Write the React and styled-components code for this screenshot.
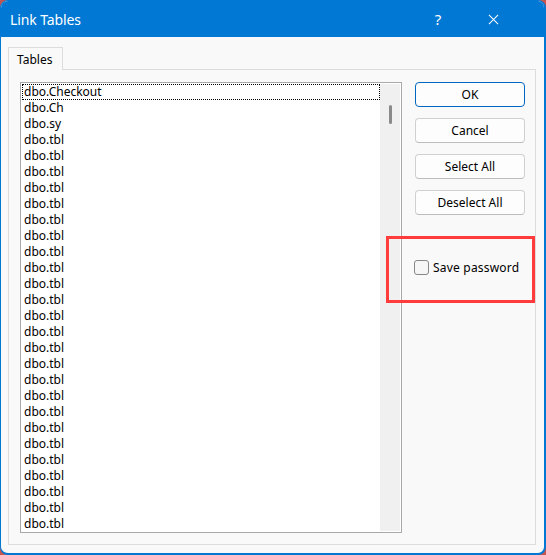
import React from "react";
import styled, { createGlobalStyle } from "styled-components";

const GlobalStyle = createGlobalStyle`
  html, body {
    margin: 0;
    padding: 0;
    background: #c4564f;
  }
  * {
    box-sizing: border-box;
  }
`;

const rows = [
  "dbo.Checkout",
  "dbo.Ch",
  "dbo.sy",
  ...Array.from({ length: 25 }, () => "dbo.tbl"),
];

const buttons = ["OK", "Cancel", "Select All", "Deselect All"];

const App = () => {
  return (
    <>
      <GlobalStyle />
      <Window>
        <TitleBar>
          <Title>Link Tables</Title>
          <TitleActions>
            <HelpMark>?</HelpMark>
            <CloseIcon viewBox="0 0 12 12">
              <path d="M1 1 L11 11 M11 1 L1 11" stroke="#fff" strokeWidth="1.1" fill="none" />
            </CloseIcon>
          </TitleActions>
        </TitleBar>
        <Body>
          <TabStrip>
            <Tab>Tables</Tab>
          </TabStrip>
          <Panel>
            <ListBox>
              <Items>
                {rows.map((name, index) => (
                  <Item key={index} focused={index === 0}>
                    {name}
                  </Item>
                ))}
              </Items>
              <ScrollTrack>
                <Thumb />
              </ScrollTrack>
            </ListBox>
            <Side>
              {buttons.map((label) => (
                <Button key={label} primary={label === "OK"}>
                  {label}
                </Button>
              ))}
              <Highlight>
                <CheckRow>
                  <CheckBox />
                  <CheckLabel>Save password</CheckLabel>
                </CheckRow>
              </Highlight>
            </Side>
          </Panel>
        </Body>
      </Window>
    </>
  );
};

export default App;

const Window = styled.div`
  width: 546px;
  height: 555px;
  display: flex;
  flex-direction: column;
  border: 1px solid #0078d4;
  border-right-width: 2px;
  border-bottom-width: 2px;
  border-radius: 8px;
  overflow: hidden;
  background: #f9f9f9;
  font-family: "Noto Sans", "Open Sans", sans-serif;
`;

const TitleBar = styled.div`
  height: 36px;
  flex: none;
  display: flex;
  align-items: center;
  justify-content: space-between;
  background: #0078d4;
  padding: 0 0 0 9px;
`;

const Title = styled.span`
  color: #fff;
  font-size: 14px;
  letter-spacing: -0.1px;
`;

const TitleActions = styled.div`
  display: flex;
  align-items: center;
`;

const HelpMark = styled.span`
  color: #fff;
  font-size: 15px;
  width: 56px;
  text-align: center;
  margin-top: -1px;
`;

const CloseIcon = styled.svg`
  width: 11px;
  height: 11px;
  margin: 0 45px 0 22px;
`;

const Body = styled.div`
  flex: 1;
  display: flex;
  flex-direction: column;
  padding: 10px 8px 8px 7px;
`;

const TabStrip = styled.div`
  display: flex;
  height: 22px;
  position: relative;
  z-index: 1;
`;

const Tab = styled.div`
  width: 55px;
  height: 23px;
  padding: 3px 0 0 8px;
  font-size: 12px;
  color: #000;
  background: #f9f9f9;
  border: 1px solid #dcdcdc;
  border-bottom: none;
`;

const Panel = styled.div`
  flex: 1;
  display: flex;
  gap: 13px;
  padding: 12px 10px 11px 11px;
  border: 1px solid #dcdcdc;
`;

const ListBox = styled.div`
  width: 385px;
  height: 451px;
  display: flex;
  background: #fff;
  border: 1px solid #a9a9a9;
  padding: 1px;
`;

const Items = styled.div`
  flex: 1;
  display: flex;
  flex-direction: column;
  overflow: hidden;
`;

const Item = styled.div`
  height: 16px;
  flex: none;
  display: flex;
  align-items: center;
  padding-left: 2px;
  font-size: 12px;
  line-height: 16px;
  white-space: nowrap;
  color: #000;
  outline: ${(p) => (p.focused ? "1px dotted #000" : "none")};
  outline-offset: -1px;
`;

const ScrollTrack = styled.div`
  width: 20px;
  flex: none;
  background: #f0f0f0;
  display: flex;
  justify-content: center;
  padding-top: 21px;
`;

const Thumb = styled.div`
  width: 3px;
  height: 19px;
  border-radius: 2px;
  background: #8a8a8a;
`;

const Side = styled.div`
  display: flex;
  flex-direction: column;
  gap: 11px;
  width: 110px;
`;

const Button = styled.button`
  height: 25px;
  width: 110px;
  font-family: inherit;
  font-size: 12px;
  color: #000;
  background: #fdfdfd;
  border: 1px solid ${(p) => (p.primary ? "#0067c0" : "#d0d0d0")};
  border-bottom-color: ${(p) => (p.primary ? "#0067c0" : "#bcbcbc")};
  border-radius: 4px;
  padding: 0;
`;

const Highlight = styled.div`
  margin: 10px -10px 0 -29px;
  height: 67px;
  border: 3px solid #ff3b3b;
  display: flex;
  align-items: center;
  padding: 0 0 4px 25px;
`;

const CheckRow = styled.label`
  display: flex;
  align-items: center;
  gap: 4px;
`;

const CheckBox = styled.span`
  width: 15px;
  height: 15px;
  border: 1px solid #878787;
  border-radius: 3px;
  background: #f6f6f6;
`;

const CheckLabel = styled.span`
  font-size: 12px;
  letter-spacing: 0.2px;
  color: #000;
`;
